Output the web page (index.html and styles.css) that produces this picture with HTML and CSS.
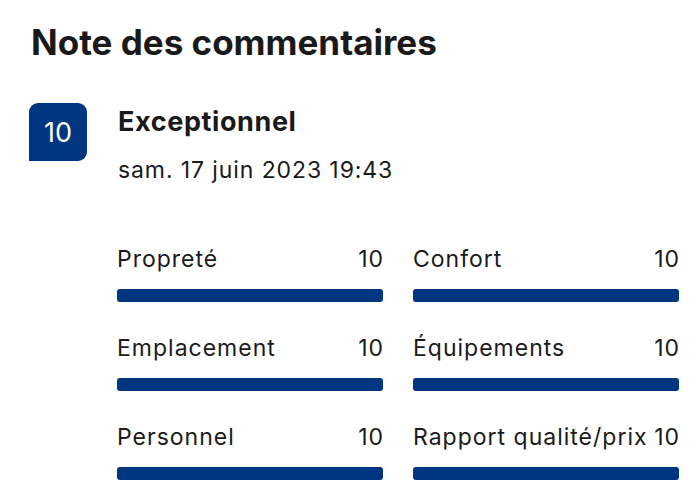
FILE: index.html
```html
<!DOCTYPE html>
<html lang="fr">
<head>
  <meta charset="UTF-8">
  <title>Note des commentaires</title>
  <link rel="stylesheet" href="styles.css">
</head>
<body>
  <h2 class="title">Note des commentaires</h2>

  <div class="review">
    <div class="badge">10</div>
    <div class="review-info">
      <div class="review-label">Exceptionnel</div>
      <div class="review-date">sam. 17 juin 2023 19:43</div>
    </div>
  </div>

  <div class="scores">
    <div class="score">
      <div class="score-head"><span>Propreté</span><span>10</span></div>
      <div class="bar"><div class="bar-fill" style="width: 100%"></div></div>
    </div>
    <div class="score">
      <div class="score-head"><span>Confort</span><span>10</span></div>
      <div class="bar"><div class="bar-fill" style="width: 100%"></div></div>
    </div>
    <div class="score">
      <div class="score-head"><span>Emplacement</span><span>10</span></div>
      <div class="bar"><div class="bar-fill" style="width: 100%"></div></div>
    </div>
    <div class="score">
      <div class="score-head"><span>Équipements</span><span>10</span></div>
      <div class="bar"><div class="bar-fill" style="width: 100%"></div></div>
    </div>
    <div class="score">
      <div class="score-head"><span>Personnel</span><span>10</span></div>
      <div class="bar"><div class="bar-fill" style="width: 100%"></div></div>
    </div>
    <div class="score">
      <div class="score-head"><span>Rapport qualité/prix</span><span>10</span></div>
      <div class="bar"><div class="bar-fill" style="width: 100%"></div></div>
    </div>
  </div>
</body>
</html>
```

FILE: styles.css
```css
body {
  font-family: Inter, "Noto Sans", sans-serif;
  color: #1a1a1a;
  background: #fff;
  margin: 0;
  padding: 0 21px 0 29px;
}
.title {
  font-size: 35px;
  font-weight: 700;
  margin: 0;
  padding-top: 22px;
  line-height: 40px;
  padding-left: 2px;
}
.review {
  display: flex;
  gap: 31px;
  margin-top: 41px;
}
.badge {
  width: 58px;
  height: 58px;
  background: #003580;
  color: #fff;
  border-radius: 9px 9px 9px 0;
  display: flex;
  align-items: center;
  justify-content: center;
  font-size: 27px;
  flex-shrink: 0;
}
.review-label {
  font-size: 27px;
  font-weight: 700;
  line-height: 32px;
  letter-spacing: 0.6px;
  margin-top: 3px;
}
.review-date {
  font-size: 23px;
  line-height: 28px;
  letter-spacing: 0.9px;
  margin-top: 18px;
}
.scores {
  display: grid;
  grid-template-columns: 266px 266px;
  column-gap: 30px;
  row-gap: 32px;
  margin-top: 61px;
  margin-left: 88px;
}
.score-head {
  display: flex;
  justify-content: space-between;
  font-size: 23px;
  line-height: 28px;
  letter-spacing: 1px;
  margin-right: -1px;
}
.bar {
  margin-top: 16px;
  height: 13px;
  border-radius: 3px;
  background: #e7e7e7;
}
.bar-fill {
  height: 100%;
  border-radius: 3px;
  background: #003580;
}
```
